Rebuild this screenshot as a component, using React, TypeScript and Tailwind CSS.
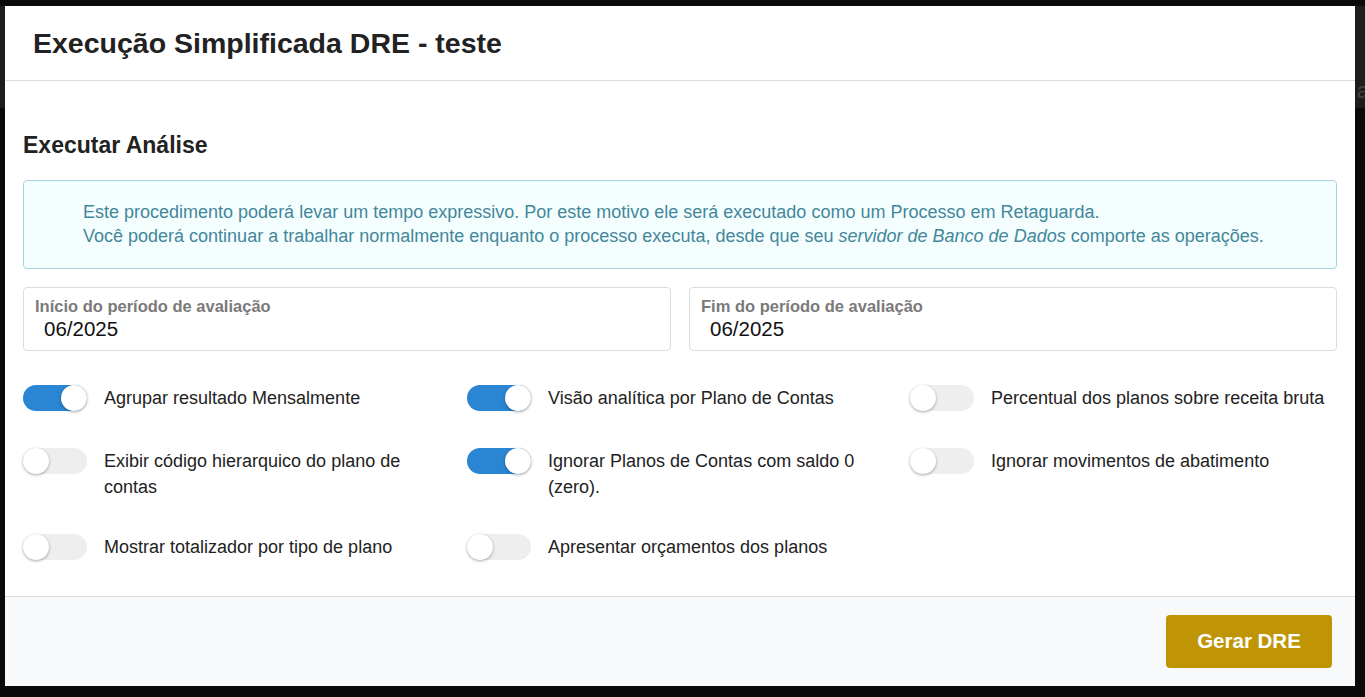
import { useState } from 'react';

type Opt = { label: string; on: boolean };

const cols: Opt[][] = [
  [
    { label: 'Agrupar resultado Mensalmente', on: true },
    { label: 'Exibir código hierarquico do plano de contas', on: false },
    { label: 'Mostrar totalizador por tipo de plano', on: false },
  ],
  [
    { label: 'Visão analítica por Plano de Contas', on: true },
    { label: 'Ignorar Planos de Contas com saldo 0 (zero).', on: true },
    { label: 'Apresentar orçamentos dos planos', on: false },
  ],
  [
    { label: 'Percentual dos planos sobre receita bruta', on: false },
    { label: 'Ignorar movimentos de abatimento', on: false },
  ],
];

function Switch({ initial }: { initial: boolean }) {
  const [on, setOn] = useState(initial);
  return (
    <button
      onClick={() => setOn(!on)}
      className={`relative shrink-0 w-[64px] h-[26px] rounded-full ${on ? 'bg-[#2a85d3]' : 'bg-[#eeeeee]'}`}
    >
      <span
        className={`absolute top-0 w-[26px] h-[26px] rounded-full bg-white shadow-[0_1px_3px_rgba(0,0,0,0.35)] ${on ? 'left-[38px]' : 'left-0'}`}
      />
    </button>
  );
}

function Field({ label, value }: { label: string; value: string }) {
  return (
    <div className="flex-1 h-[64px] border border-[#dcdcdc] rounded-[4px] px-[11px] pt-[8px]">
      <div className="text-[16.5px] font-bold text-[#7a7a7a] leading-[20px]">{label}</div>
      <div className="text-[20.5px] text-[#111] leading-[24px] pl-[9px] mt-[1px]">{value}</div>
    </div>
  );
}

export default function App() {
  return (
    <div className="relative w-[1365px] h-[697px] bg-[#0a0a0a] overflow-hidden" style={{ fontFamily: '"Liberation Sans", Arial, sans-serif' }}>
      {/* page behind the overlay */}
      <div className="mt-[6px] h-[102px] bg-[#1d1d1d] flex justify-between">
        <span className="text-[#1d3048] text-[22px] -ml-[10px] mt-[18px]">s</span>
        <span className="text-[#444] text-[22px] -mr-[4px] mt-[68px]">a</span>
      </div>

      <div className="absolute left-[5px] top-[6px] w-[1350px] h-[680px] bg-white flex flex-col">
        <div className="h-[75px] border-b border-[#dedede] flex items-center px-[28px]">
          <h1 className="text-[28.5px] font-bold text-[#222] pt-[1px]">Execução Simplificada DRE - teste</h1>
        </div>

        <div className="flex-1 px-[18px] pt-[51px]">
          <h2 className="text-[23px] font-bold text-[#222] leading-[26px]">Executar Análise</h2>

          <div className="mt-[22px] border border-[#a7d4db] bg-[#f4feff] rounded-[4px] h-[89px] pl-[59px] pt-[19px] text-[18px] leading-[24px] text-[#43879a]">
            <p>Este procedimento poderá levar um tempo expressivo. Por este motivo ele será executado como um Processo em Retaguarda.</p>
            <p>
              Você poderá continuar a trabalhar normalmente enquanto o processo executa, desde que seu{' '}
              <i>servidor de Banco de Dados</i> comporte as operações.
            </p>
          </div>

          <div className="mt-[18px] flex gap-[18px]">
            <Field label="Início do período de avaliação" value="06/2025" />
            <Field label="Fim do período de avaliação" value="06/2025" />
          </div>

          <div className="mt-[34px] -mr-[18px] grid grid-cols-[444px_443px_1fr]">
            {cols.map((col, ci) => (
              <div key={ci} className="flex flex-col">
                {col.map((o, i) => (
                  <div key={i} className={`flex items-start gap-[17px] ${i === 0 ? 'h-[63px]' : i === 1 ? 'h-[86px]' : 'h-[40px]'}`}>
                    <Switch initial={o.on} />
                    <span className="text-[18px] leading-[26px] text-[#222] max-w-[350px]">{o.label}</span>
                  </div>
                ))}
              </div>
            ))}
          </div>
        </div>

        <div className="h-[90px] border-t border-[#d9d9d9] bg-[#f8f9fa] flex items-start justify-end pr-[23px] pt-[18px]">
          <button className="w-[166px] h-[53px] rounded-[4px] bg-[#bf9505] text-white font-bold text-[20.5px]">Gerar DRE</button>
        </div>
      </div>
    </div>
  );
}
